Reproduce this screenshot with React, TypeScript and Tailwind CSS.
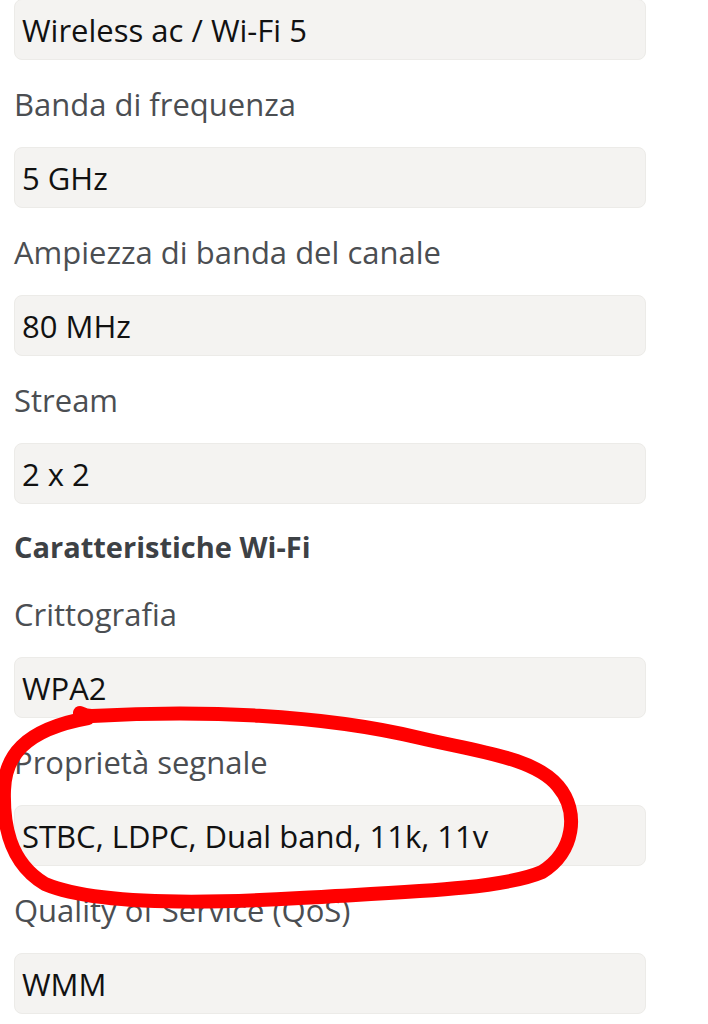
import React from "react";

type Field = { label: string; value: string };

const topValue = "Wireless ac / Wi-Fi 5";

const radio: Field[] = [
  { label: "Banda di frequenza", value: "5 GHz" },
  { label: "Ampiezza di banda del canale", value: "80 MHz" },
  { label: "Stream", value: "2 x 2" },
];

const features: Field[] = [
  { label: "Crittografia", value: "WPA2" },
  { label: "Proprietà segnale", value: "STBC, LDPC, Dual band, 11k, 11v" },
  { label: "Quality of Service (QoS)", value: "WMM" },
];

function ValueBox({ value, className = "" }: { value: string; className?: string }) {
  return (
    <div
      className={`flex h-[61px] items-center rounded-[8px] border border-[#ecebe8] bg-[#f4f3f1] px-[7px] text-[31px] leading-[40px] text-[#111111] ${className}`}
    >
      {value}
    </div>
  );
}

function Row({ item }: { item: Field }) {
  return (
    <div>
      <div className="flex h-[87px] items-center text-[31px] leading-[40px] text-[#4b4e52]">
        {item.label}
      </div>
      <ValueBox value={item.value} />
    </div>
  );
}

export default function App() {
  return (
    <div
      className="relative h-[1024px] w-[708px] overflow-hidden bg-white"
      style={{ fontFamily: "'Open Sans', 'Noto Sans', sans-serif" }}
    >
      <div className="ml-[14px] w-[632px]">
        <ValueBox value={topValue} className="-mt-px" />
        {radio.map((item) => (
          <Row key={item.label} item={item} />
        ))}
        <div className="h-[66px] pt-[24px] text-[29px] font-bold leading-[38px] text-[#3d4145]">
          Caratteristiche Wi-Fi
        </div>
        {features.map((item) => (
          <Row key={item.label} item={item} />
        ))}
      </div>

      {/* hand-drawn red marker ring */}
      <svg
        className="pointer-events-none absolute left-0 top-0"
        width="708"
        height="1024"
        viewBox="0 0 708 1024"
      >
        <path
          d="M 80 713 C 84 715 88 716 92 716 C 200 710 320 714 420 738 C 480 752 535 758 558 786 C 580 812 574 852 542 872 C 500 890 400 892 300 898 C 200 904 95 905 45 884 C 8 862 3 822 4 790 C 5 758 22 730 88 718"
          fill="none"
          stroke="#ff0000"
          strokeWidth="14"
          strokeLinecap="round"
          strokeLinejoin="round"
        />
      </svg>
    </div>
  );
}
